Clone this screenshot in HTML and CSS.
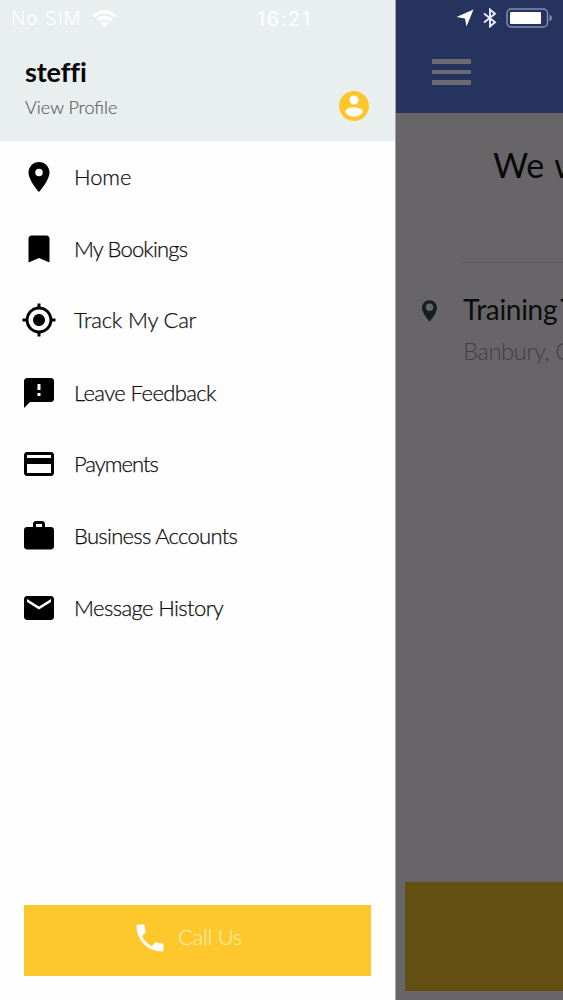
FILE: index.html
```html
<!DOCTYPE html>
<html lang="en">
<head>
<meta charset="utf-8">
<title>Menu</title>
<link rel="stylesheet" href="styles.css">
</head>
<body>
<div class="screen">
  <aside class="drawer">
    <header class="profile">
      <div class="status">
        <span class="carrier">No SIM</span>
        <svg class="wifi" viewBox="0 0 24 18"><path d="M0 5.2a17 17 0 0 1 24 0l-2.3 2.4a13.700 13.700 0 0 0-19.400 0zM4 9.300a11.300 11.300 0 0 1 16 0l-2.300 2.300a8 8 0 0 0-11.400 0zM8 13.300a5.600 5.600 0 0 1 8 0L12 17.300z"/></svg>
        <span class="clock">16:21</span>
      </div>
      <div class="who">
        <div class="names">
          <h1 class="name">steffi</h1>
          <a class="view">View Profile</a>
        </div>
        <svg class="avatar" viewBox="0 0 24 24"><circle cx="12" cy="12" r="9.500" fill="#fff"/><path d="M12 2C6.480 2 2 6.480 2 12s4.480 10 10 10 10-4.480 10-10S17.520 2 12 2zm0 3c1.660 0 3 1.340 3 3s-1.340 3-3 3-3-1.340-3-3 1.340-3 3-3zm0 14.200c-2.500 0-4.710-1.280-6-3.220.030-1.990 4-3.080 6-3.080 1.990 0 5.970 1.090 6 3.080-1.290 1.940-3.500 3.220-6 3.220z"/></svg>
      </div>
    </header>
    <nav class="menu">
      <a class="item"><svg class="icon" viewBox="0 0 24 24"><path d="M12 2C8.130 2 5 5.130 5 9c0 5.250 7 13 7 13s7-7.750 7-13c0-3.870-3.130-7-7-7zm0 9.500a2.500 2.500 0 0 1 0-5 2.500 2.500 0 0 1 0 5z"/></svg><span class="label label-home">Home</span></a>
      <a class="item"><svg class="icon" viewBox="0 0 24 24"><path d="M17 3H7c-1.100 0-2 .9-2 2v16l7-3 7 3V5c0-1.100-.9-2-2-2z"/></svg><span class="label label-bookings">My Bookings</span></a>
      <a class="item"><svg class="icon" viewBox="0 0 24 24"><path d="M12 8c-2.210 0-4 1.790-4 4s1.790 4 4 4 4-1.790 4-4-1.790-4-4-4zm8.940 3A8.994 8.994 0 0 0 13 3.060V1h-2v2.060A8.994 8.994 0 0 0 3.060 11H1v2h2.060A8.994 8.994 0 0 0 11 20.940V23h2v-2.060A8.994 8.994 0 0 0 20.940 13H23v-2h-2.060zM12 19c-3.870 0-7-3.130-7-7s3.130-7 7-7 7 3.130 7 7-3.130 7-7 7z"/></svg><span class="label label-track">Track My Car</span></a>
      <a class="item item-feedback"><svg class="icon" viewBox="0 0 24 24"><path d="M20 2H4c-1.100 0-1.990.9-1.990 2L2 22l4-4h14c1.100 0 2-.9 2-2V4c0-1.100-.9-2-2-2zm-7 12h-2v-2h2v2zm0-4h-2V6h2v4z"/></svg><span class="label">Leave Feedback</span></a>
      <a class="item"><svg class="icon" viewBox="0 0 24 24"><path d="M20 4H4c-1.110 0-1.990.89-1.990 2L2 18c0 1.110.89 2 2 2h16c1.110 0 2-.89 2-2V6c0-1.110-.89-2-2-2zm0 14H4v-6h16v6zm0-10H4V6h16v2z"/></svg><span class="label label-payments">Payments</span></a>
      <a class="item"><svg class="icon" viewBox="0 0 24 24"><path d="M20 6h-4V4c0-1.110-.89-2-2-2h-4c-1.110 0-2 .89-2 2v2H4c-1.110 0-1.990.89-1.990 2L2 19c0 1.110.89 2 2 2h16c1.110 0 2-.89 2-2V8c0-1.110-.89-2-2-2zm-6 0h-4V4h4v2z"/></svg><span class="label label-business">Business Accounts</span></a>
      <a class="item"><svg class="icon" viewBox="0 0 24 24"><path d="M20 4H4c-1.100 0-1.990.9-1.990 2L2 18c0 1.100.9 2 2 2h16c1.100 0 2-.9 2-2V6c0-1.100-.9-2-2-2zm0 4l-8 5-8-5V6l8 5 8-5v2z"/></svg><span class="label">Message History</span></a>
    </nav>
    <button class="call">
      <svg class="phone" viewBox="0 0 24 24"><path d="M6.620 10.790c1.440 2.830 3.760 5.140 6.590 6.590l2.200-2.200c.27-.27.67-.36 1.020-.24 1.120.37 2.330.57 3.570.57.55 0 1 .45 1 1V20c0 .55-.45 1-1 1-9.390 0-17-7.610-17-17 0-.55.45-1 1-1h3.500c.55 0 1 .45 1 1 0 1.250.2 2.450.57 3.570.11.350.03.740-.25 1.020l-2.200 2.200z"/></svg>
      <span class="call-text">Call Us</span>
    </button>
  </aside>
  <main class="page">
    <header class="bar">
      <div class="tray">
        <svg class="arrow" viewBox="0 0 18 18"><path d="M17.500.5 10.500 17.500 9 9.500.5 8z"/></svg>
        <svg class="bluetooth" viewBox="0 0 14 20"><path d="M1 5.500 12 14.300 7 18.500V1.500L12 5.700 1 14.500"/></svg>
        <svg class="battery" viewBox="0 0 48 20"><rect x="1" y="1" width="40.500" height="18" rx="4"/><rect class="charge" x="4" y="4" width="31" height="12" rx="1"/><path class="cap" d="M43.500 6.500q2.500 1 2.500 3.500t-2.500 3.500z"/></svg>
      </div>
      <div class="burger"><i></i><i></i><i></i></div>
    </header>
    <h2 class="title">We w</h2>
    <div class="place">
      <svg class="pin" viewBox="0 0 14 20"><path fill-rule="evenodd" d="M7 0C3.130 0 0 3.130 0 7c0 5.250 7 13 7 13s7-7.750 7-13c0-3.870-3.130-7-7-7zm0 10a3.500 3.500 0 0 1 0-7 3.500 3.500 0 0 1 0 7z"/></svg>
      <div class="address">
        <div class="street">Training T</div>
        <div class="town">Banbury, O</div>
      </div>
    </div>
    <div class="action"></div>
  </main>
</div>
</body>
</html>
```
FILE: styles.css
```css
* { box-sizing: border-box; }
body { margin: 0; font-family: Lato, "Open Sans", sans-serif; }
.screen { display: flex; width: 563px; height: 1000px; overflow: hidden; background: #fff; }
.drawer { display: flex; flex-direction: column; flex: none; width: 396px; height: 1000px; background: #fefefe; border-right: 1px solid #a4a5a8; }
.profile { height: 141px; background: #e9eeef; }
.status { display: flex; align-items: center; height: 38px; padding-left: 11px; color: #fff; font: 400 19px/38px Inter, sans-serif; }
.carrier { width: 81px; letter-spacing: 0.9px; font-weight: 300; white-space: nowrap; }
.wifi { width: 25px; height: 18px; fill: #fff; }
.clock { margin-left: 140px; font-size: 20px; letter-spacing: 1.600px; }
.who { display: flex; justify-content: space-between; padding: 18px 25px 0 25px; }
.name { margin: 0; font-size: 27px; line-height: 32px; font-weight: 700; letter-spacing: -0.1px; color: #050505; }
.view { display: block; margin-top: 8px; font-size: 18px; line-height: 22px; font-weight: 300; color: #5c6163; -webkit-text-stroke: 0.2px; }
.avatar { width: 36px; height: 36px; margin: 32px -2px 0 0; fill: #fec62d; }
.menu { flex: 1; }
.item { display: flex; align-items: center; height: 71.800px; padding-left: 21px; }
.item-feedback { padding-top: 2px; }
.icon { width: 36px; height: 36px; margin-right: 17px; }
.label { font-size: 22px; line-height: 30px; font-weight: 300; letter-spacing: -0.600px; color: #111; white-space: nowrap; -webkit-text-stroke: 0.25px; }
.label-home { letter-spacing: -0.1px; }
.label-bookings { letter-spacing: -0.850px; }
.label-track { letter-spacing: -0.2px; }
.label-payments { letter-spacing: -1px; }
.label-business { letter-spacing: -0.700px; }
.call { display: flex; align-items: center; width: 347px; height: 71px; margin: 0 0 24px 24px; padding: 0 0 5px 108px; border: 0; background: #fec82d; }
.phone { width: 36px; height: 36px; fill: #fff; }
.call-text { margin: -2px 0 0 10px; font: 300 22px/30px Lato, sans-serif; letter-spacing: -0.3px; color: #fff0bd; }
.page { display: flex; flex-direction: column; flex: none; width: 167px; overflow: hidden; background: #676568; white-space: nowrap; }
.bar { height: 113px; background: #27335f; }
.tray { display: flex; align-items: center; height: 36px; padding-left: 60px; }
.arrow { width: 18px; height: 18px; fill: #fff; }
.bluetooth { width: 14px; height: 20px; margin-left: 9px; fill: none; stroke: #e9edff; stroke-width: 1.900; }
.battery { width: 48px; height: 20px; margin-left: 9px; flex: none; fill: none; stroke: #858daf; stroke-width: 1.500; }
.charge { fill: #fff; stroke: none; }
.cap { fill: #858daf; stroke: none; }
.burger { display: flex; flex-direction: column; gap: 6px; width: 39px; margin: 23px 0 0 36px; }
.burger i { height: 4.600px; background: #696a72; }
.title { width: 102px; height: 149px; margin: 0 0 0 97px; padding-top: 31px; font-size: 34px; line-height: 42px; font-weight: 400; word-spacing: 2px; color: #080808; }
.place { display: flex; }
.pin { flex: none; width: 15px; height: 22px; margin: 38px 0 0 26px; fill: #152024; }
.address { flex: none; width: 104px; margin-left: 23px; padding: 29px 0 0 3px; border-top: 1px solid #5d5b5e; }
.street { font-size: 28px; line-height: 34px; letter-spacing: -0.3px; word-spacing: -3px; color: #0d0d0e; }
.town { margin-top: 9px; font-size: 24px; line-height: 32px; font-weight: 300; letter-spacing: -0.6px; color: #424143; }
.action { height: 109px; margin: auto 0 9px 9px; background: #645012; }
```
